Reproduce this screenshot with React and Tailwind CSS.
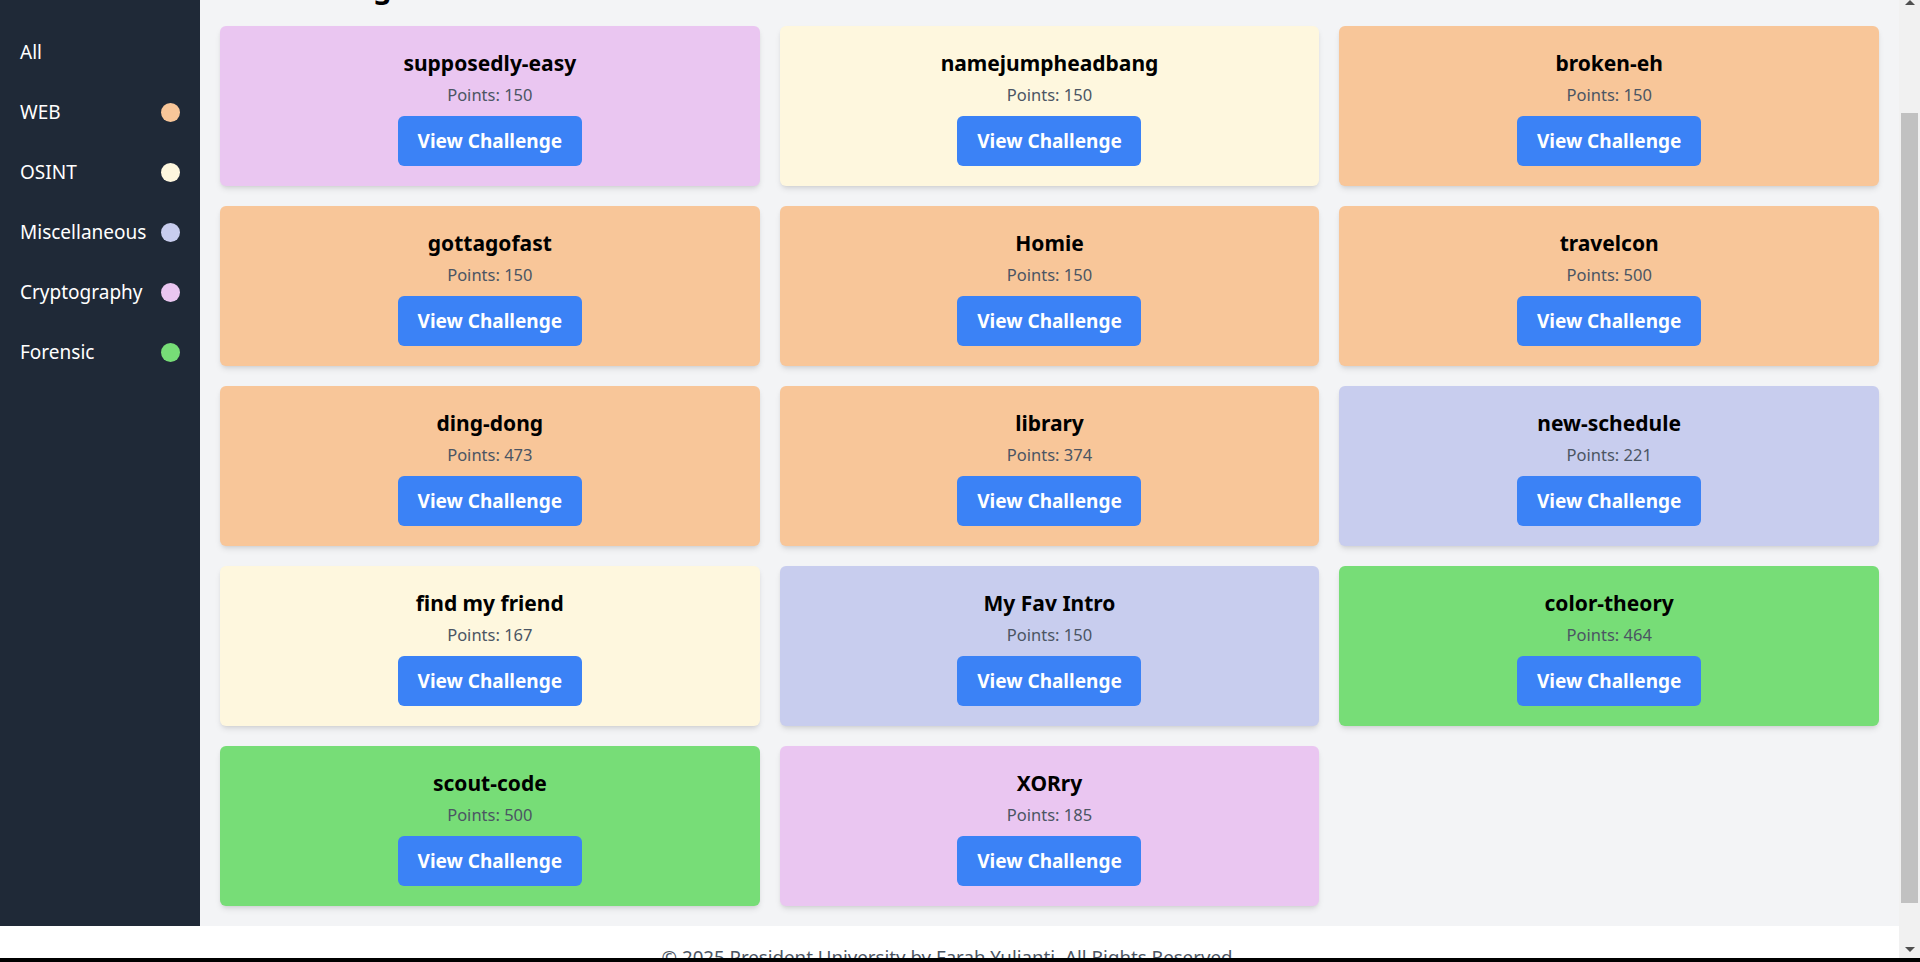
const challenges = [
  { name: "supposedly-easy", points: 150, color: "bg-[#eac6f1]" },
  { name: "namejumpheadbang", points: 150, color: "bg-[#fef7de]" },
  { name: "broken-eh", points: 150, color: "bg-[#f8c699]" },
  { name: "gottagofast", points: 150, color: "bg-[#f8c699]" },
  { name: "Homie", points: 150, color: "bg-[#f8c699]" },
  { name: "travelcon", points: 500, color: "bg-[#f8c699]" },
  { name: "ding-dong", points: 473, color: "bg-[#f8c699]" },
  { name: "library", points: 374, color: "bg-[#f8c699]" },
  { name: "new-schedule", points: 221, color: "bg-[#c8cdee]" },
  { name: "find my friend", points: 167, color: "bg-[#fef7de]" },
  { name: "My Fav Intro", points: 150, color: "bg-[#c8cdee]" },
  { name: "color-theory", points: 464, color: "bg-[#77dd77]" },
  { name: "scout-code", points: 500, color: "bg-[#77dd77]" },
  { name: "XORry", points: 185, color: "bg-[#eac6f1]" },
];

const categories = [
  { label: "All", dot: null },
  { label: "WEB", dot: "bg-[#f8c699]" },
  { label: "OSINT", dot: "bg-[#fef7de]" },
  { label: "Miscellaneous", dot: "bg-[#c8cdee]" },
  { label: "Cryptography", dot: "bg-[#eac6f1]" },
  { label: "Forensic", dot: "bg-[#77dd77]" },
];

const ChallengeCard = ({ name, points, color }) => {
  return (
    <div className={`${color} h-[160px] rounded-md shadow-md flex flex-col items-center pt-[22px]`}>
      <h3 className="text-[21px] leading-[30px] font-bold text-black">{name}</h3>
      <p className="mt-[4px] text-[16.5px] leading-[26px] text-[#4b5563]">Points: {points}</p>
      <button className="mt-[8px] h-[50px] w-[184px] rounded-md bg-[#3b82f6] text-white text-[19px] font-bold">
        View Challenge
      </button>
    </div>
  );
};

const Scrollbar = () => {
  return (
    <div className="w-[21px] bg-[#f1f1f1] flex flex-col">
      <div className="h-[113px] flex justify-center">
        <div className="w-0 h-0 border-l-[5px] border-r-[5px] border-b-[5px] border-l-transparent border-r-transparent border-b-[#505050]" />
      </div>
      <div className="h-[790px] mx-[2px] bg-[#c1c1c1]" />
      <div className="flex-1 flex justify-center items-end pb-[6px]">
        <div className="w-0 h-0 border-l-[5px] border-r-[5px] border-t-[5px] border-l-transparent border-r-transparent border-t-[#505050]" />
      </div>
    </div>
  );
};

export default function App() {
  return (
    <div className="h-[962px] overflow-hidden flex flex-col bg-white font-['Noto_Sans',sans-serif]">
      <div className="flex flex-1 min-h-0">
        <div className="flex-1 min-w-0 overflow-hidden">
          {/* page content, scrolled down a little */}
          <div className="-mt-[51px]">
            <div className="flex">
              <aside className="w-[200px] shrink-0 bg-[#1f2937] pt-[73px]">
                {categories.map((c) => (
                  <div key={c.label} className="h-[60px] px-5 flex items-center justify-between text-white text-[19px]">
                    <span>{c.label}</span>
                    {c.dot && <span className={`w-[19px] h-[19px] rounded-full ${c.dot}`} />}
                  </div>
                ))}
              </aside>
              <main className="flex-1 bg-[#f3f4f6] p-5">
                <h2 className="text-[29px] leading-9 font-bold text-black mb-[21px]">All Challenges</h2>
                <div className="grid grid-cols-3 gap-5">
                  {challenges.map((ch) => (
                    <ChallengeCard key={ch.name} {...ch} />
                  ))}
                </div>
              </main>
            </div>
            <footer className="bg-white pt-[18px] pb-6 text-center text-[18.7px] leading-[26px] text-[#4b5563]">
              © 2025 President University by Farah Yulianti. All Rights Reserved.
            </footer>
          </div>
        </div>
        <Scrollbar />
      </div>
      <div className="h-[4px] bg-black" />
    </div>
  );
}
